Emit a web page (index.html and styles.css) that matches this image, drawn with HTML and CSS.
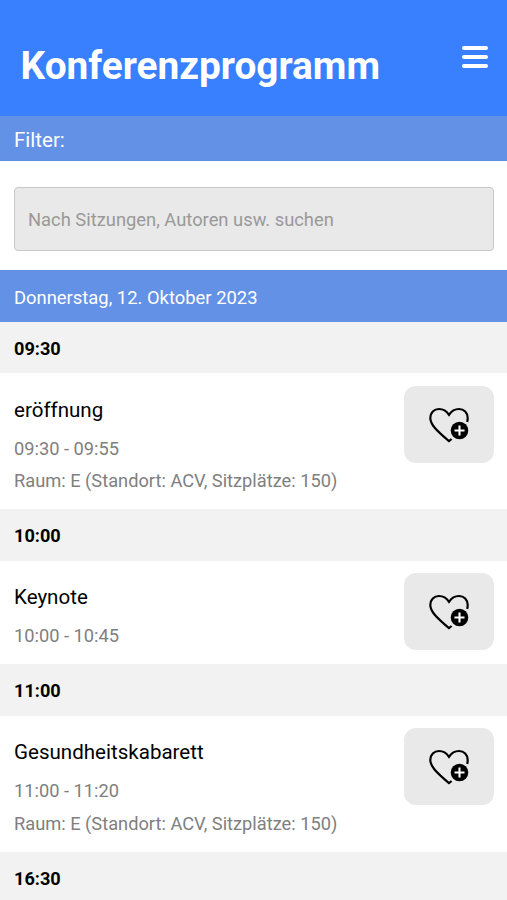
FILE: index.html
```html
<!DOCTYPE html>
<html lang="de">
<head>
<meta charset="utf-8">
<title>Konferenzprogramm</title>
<link rel="stylesheet" href="styles.css">
</head>
<body>
<svg class="defs" width="0" height="0" aria-hidden="true">
  <symbol id="fav" viewBox="0 0 42 38">
    <path d="M23.600 33L21 35.100C15.500 30.500 10.500 26.300 6.500 21.500C3.500 17.800 2.300 15 2.300 12C2.300 6.800 6 3 11 3C15.500 3 18.500 5 21 8.800C23.500 5 26.500 3 31 3C36 3 39.700 6.800 39.700 12Q39.700 14 39.200 16" fill="none" stroke="#000" stroke-width="2.200"/>
    <circle cx="31.500" cy="24.500" r="8.800" fill="#000"/>
    <path d="M26.500 24.500h10M31.500 19.500v10" stroke="#fff" stroke-width="2.100"/>
  </symbol>
</svg>
<header class="top">
  <h1>Konferenzprogramm</h1>
  <button class="menu" aria-label="Menü"><span></span><span></span><span></span></button>
</header>
<div class="filter">Filter:</div>
<div class="search"><input type="text" placeholder="Nach Sitzungen, Autoren usw. suchen"></div>
<div class="date">Donnerstag, 12. Oktober 2023</div>
<main>
  <h2 class="hour">09:30</h2>
  <article class="session"><div><h3>eröffnung</h3><p>09:30 - 09:55</p><p>Raum: E (Standort: ACV, Sitzplätze: 150)</p></div><button class="fav"><svg><use href="#fav"/></svg></button></article>
  <h2 class="hour">10:00</h2>
  <article class="session short"><div><h3>Keynote</h3><p>10:00 - 10:45</p></div><button class="fav"><svg><use href="#fav"/></svg></button></article>
  <h2 class="hour">11:00</h2>
  <article class="session"><div><h3>Gesundheitskabarett</h3><p>11:00 - 11:20</p><p>Raum: E (Standort: ACV, Sitzplätze: 150)</p></div><button class="fav"><svg><use href="#fav"/></svg></button></article>
  <h2 class="hour">16:30</h2>
</main>
</body>
</html>
```
FILE: styles.css
```css
* { box-sizing: border-box; margin: 0; padding: 0; }
body { font-family: Roboto, sans-serif; background: #fff; color: #000; height: 900px; overflow: hidden; }
.defs { display: block; }
.top { height: 115.500px; background: #3880ff; display: flex; justify-content: space-between; padding: 42px 19px 0 20.500px; color: #fff; }
h1 { font-size: 38.800px; line-height: 47px; font-weight: 700; }
.menu { width: 26px; height: 30px; border: 0; background: none; display: flex; flex-direction: column; justify-content: center; gap: 4.500px; }
.menu span { height: 4.500px; border-radius: 2px; background: #fff; }
.filter { height: 45.500px; line-height: 49px; padding-left: 14px; background: #6391e5; color: #fff; font-size: 20.500px; }
.search { height: 109px; padding: 26px 13px 0 14px; }
.search input { width: 100%; height: 64px; border: 1.500px solid #c8c8c8; border-radius: 4px; background: #e9e9e9; font: 18.350px Roboto, sans-serif; padding: 1px 13px; }
.search input::placeholder { color: #999; opacity: 1; }
.date { height: 52px; line-height: 55px; padding-left: 14px; background: #6391e5; color: #fff; font-size: 18.400px; }
.hour { height: 51.400px; line-height: 54px; padding-left: 14px; background: #f2f2f2; font-size: 18.150px; font-weight: 700; }
.session { height: 135.900px; display: flex; justify-content: space-between; padding: 12.800px 13px 0 14px; }
.short { height: 103.600px; }
h3 { font-size: 20.550px; font-weight: 400; line-height: 24px; margin: 11.800px 0 11px; }
p { font-size: 18.250px; line-height: 32.400px; color: #808080; }
.fav { width: 90px; height: 77px; border: 0; border-radius: 12px; background: #e9e9e9; display: flex; align-items: center; justify-content: center; }
.fav svg { width: 42px; height: 38px; display: block; }
```
